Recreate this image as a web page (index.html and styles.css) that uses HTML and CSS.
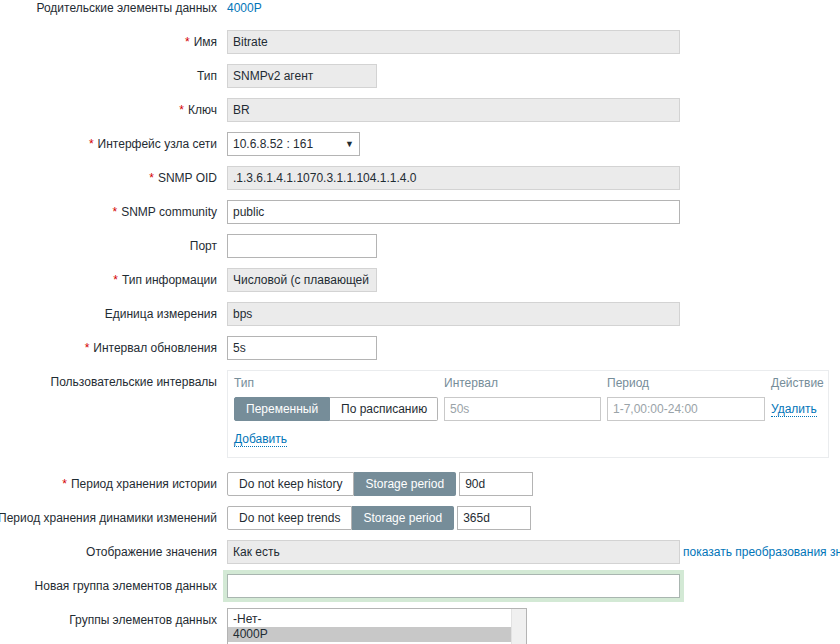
FILE: index.html
```html
<!DOCTYPE html>
<html lang="ru">
<head>
<meta charset="utf-8">
<title>Элемент данных</title>
<link rel="stylesheet" href="styles.css">
</head>
<body>
<div class="form">
  <div class="row first">
    <div class="label">Родительские элементы данных</div>
    <a class="link" href="#">4000P</a>
  </div>
  <div class="row">
    <div class="label"><span class="req">*</span>Имя</div>
    <div class="field ro wide">Bitrate</div>
  </div>
  <div class="row">
    <div class="label">Тип</div>
    <div class="field ro short">SNMPv2 агент</div>
  </div>
  <div class="row">
    <div class="label"><span class="req">*</span>Ключ</div>
    <div class="field ro wide">BR</div>
  </div>
  <div class="row">
    <div class="label"><span class="req">*</span>Интерфейс узла сети</div>
    <div class="field select"><span>10.6.8.52 : 161</span><span class="arrow">▼</span></div>
  </div>
  <div class="row">
    <div class="label"><span class="req">*</span>SNMP OID</div>
    <div class="field ro wide">.1.3.6.1.4.1.1070.3.1.1.104.1.1.4.0</div>
  </div>
  <div class="row">
    <div class="label"><span class="req">*</span>SNMP community</div>
    <div class="field wide">public</div>
  </div>
  <div class="row">
    <div class="label">Порт</div>
    <div class="field short"></div>
  </div>
  <div class="row">
    <div class="label"><span class="req">*</span>Тип информации</div>
    <div class="field ro short">Числовой (с плавающей</div>
  </div>
  <div class="row">
    <div class="label">Единица измерения</div>
    <div class="field ro wide">bps</div>
  </div>
  <div class="row">
    <div class="label"><span class="req">*</span>Интервал обновления</div>
    <div class="field short">5s</div>
  </div>
  <div class="row top intervals-row">
    <div class="label">Пользовательские интервалы</div>
    <div class="intervals">
      <div class="iv-grid">
        <div class="iv-head">Тип</div>
        <div class="iv-head">Интервал</div>
        <div class="iv-head">Период</div>
        <div class="iv-head">Действие</div>
        <div class="seg">
          <div class="seg-btn on iv-a">Переменный</div>
          <div class="seg-btn iv-b">По расписанию</div>
        </div>
        <div class="field dis">50s</div>
        <div class="field dis">1-7,00:00-24:00</div>
        <div class="action"><a class="dotted" href="#">Удалить</a></div>
      </div>
      <div class="add"><a class="dotted" href="#">Добавить</a></div>
    </div>
  </div>
  <div class="row">
    <div class="label"><span class="req">*</span>Период хранения истории</div>
    <div class="seg">
      <div class="seg-btn">Do not keep history</div>
      <div class="seg-btn on">Storage period</div>
    </div>
    <div class="field period">90d</div>
  </div>
  <div class="row">
    <div class="label">Период хранения динамики изменений</div>
    <div class="seg">
      <div class="seg-btn">Do not keep trends</div>
      <div class="seg-btn on">Storage period</div>
    </div>
    <div class="field period">365d</div>
  </div>
  <div class="row">
    <div class="label">Отображение значения</div>
    <div class="field ro wide">Как есть</div>
    <a class="link side" href="#">показать преобразования значений</a>
  </div>
  <div class="row">
    <div class="label">Новая группа элементов данных</div>
    <div class="field wide focus"></div>
  </div>
  <div class="row top">
    <div class="label">Группы элементов данных</div>
    <div class="listbox">
      <div class="options">
        <div class="opt">-Нет-</div>
        <div class="opt sel">4000P</div>
      </div>
      <div class="scroll"></div>
    </div>
  </div>
</div>
</body>
</html>
```
FILE: styles.css
```css
html, body {
  margin: 0;
  padding: 0;
}
body {
  width: 840px;
  height: 644px;
  overflow: hidden;
  background: #ffffff;
  font-family: "Liberation Sans", Arial, sans-serif;
  font-size: 12px;
  color: #1f2c33;
}
.form {
  display: flex;
  flex-direction: column;
  gap: 10px;
  width: 1100px;
}
.row {
  display: flex;
  align-items: center;
  min-height: 24px;
}
.row.top {
  align-items: flex-start;
}
.row.first {
  min-height: 16px;
  height: 16px;
  margin-bottom: 4px;
}
.intervals-row {
  margin-bottom: 4px;
}
.label {
  flex: none;
  width: 217px;
  margin-right: 10px;
  display: flex;
  justify-content: flex-end;
  white-space: nowrap;
  line-height: 24px;
}
.row.first .label {
  line-height: 16px;
}
.req {
  color: #d40000;
  margin-right: 4px;
}
.link {
  color: #0275b8;
  text-decoration: none;
  white-space: nowrap;
}
.link.side {
  margin-left: 3px;
}
.field {
  box-sizing: border-box;
  height: 24px;
  border: 1px solid #b4b4b4;
  background: #ffffff;
  padding: 0 5px;
  line-height: 22px;
  white-space: nowrap;
  overflow: hidden;
  flex: none;
}
.field.ro {
  background: #ebebeb;
  border-color: #d3d3d3;
}
.field.wide {
  width: 453px;
}
.field.short {
  width: 150px;
}
.field.select {
  width: 133px;
  display: flex;
  justify-content: space-between;
  align-items: center;
  padding-right: 5px;
}
.arrow {
  font-size: 9px;
  line-height: 9px;
}
.field.focus {
  box-shadow: 0 0 0 4px #d3e9d5;
  border-color: #a9b6b0;
}
.field.period {
  margin-left: 3px;
  width: 74px;
}
.field.dis {
  color: #9aa3a8;
  border-color: #c9c9c9;
}
.seg {
  display: flex;
  flex: none;
}
.seg-btn {
  box-sizing: border-box;
  height: 24px;
  line-height: 22px;
  padding: 0 11px;
  border: 1px solid #b4b4b4;
  background: #ffffff;
  white-space: nowrap;
  text-align: center;
}
.seg-btn:first-child {
  border-radius: 2px 0 0 2px;
}
.seg-btn:last-child {
  border-radius: 0 2px 2px 0;
  border-left: none;
}
.seg-btn.on {
  background: #768d99;
  border-color: #768d99;
  color: #ffffff;
}
.seg-btn.iv-a {
  width: 96px;
}
.seg-btn.iv-b {
  width: 108px;
}
.intervals {
  box-sizing: border-box;
  width: 602px;
  height: 88px;
  border: 1px solid #eaecee;
  padding: 5px 6px 0;
}
.iv-grid {
  display: grid;
  grid-template-columns: 204px 157px 158px auto;
  column-gap: 6px;
  row-gap: 7px;
  align-items: center;
}
.iv-head {
  color: #768d99;
  line-height: 14px;
}
.action {
  line-height: 24px;
}
.dotted {
  color: #0275b8;
  text-decoration: none;
  border-bottom: 1px dotted #0275b8;
}
.add {
  margin-top: 11px;
  line-height: 15px;
}
.listbox {
  box-sizing: border-box;
  width: 300px;
  height: 70px;
  border: 1px solid #b4b4b4;
  display: flex;
  flex: none;
}
.options {
  flex: 1;
  padding-top: 3px;
}
.opt {
  line-height: 15px;
  padding-left: 5px;
  white-space: nowrap;
}
.opt.sel {
  background: #c8c8c8;
}
.scroll {
  width: 14px;
  background: #f0f0f0;
  border-left: 1px solid #e2e2e2;
}
```
